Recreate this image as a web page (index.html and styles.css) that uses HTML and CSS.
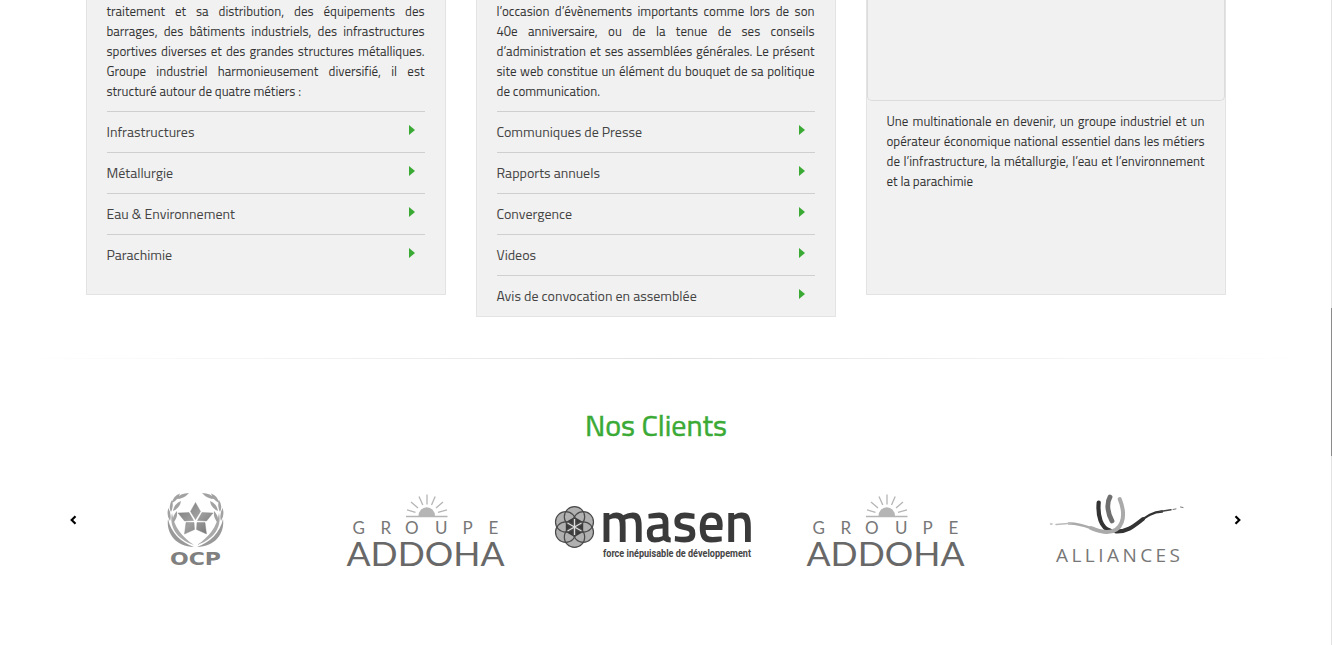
FILE: index.html
```html
<!DOCTYPE html>
<html lang="fr">
<head>
<meta charset="utf-8">
<title>Nos Clients</title>
<link rel="stylesheet" href="styles.css">
</head>
<body>
<div class="page">
<main class="content">
  <section class="cards">
    <article class="card short">
      <div class="copy">
        <p>traitement et sa distribution, des équipements des</p>
        <p>barrages, des bâtiments industriels, des infrastructures</p>
        <p>sportives diverses et des grandes structures métalliques.</p>
        <p>Groupe industriel harmonieusement diversifié, il est</p>
        <p class="last">structuré autour de quatre métiers :</p>
      </div>
      <ul class="links">
        <li><span>Infrastructures</span><i></i></li>
        <li><span>Métallurgie</span><i></i></li>
        <li><span>Eau &amp; Environnement</span><i></i></li>
        <li><span>Parachimie</span><i></i></li>
      </ul>
    </article>
    <article class="card">
      <div class="copy">
        <p>l’occasion d’évènements importants comme lors de son</p>
        <p>40e anniversaire, ou de la tenue de ses conseils</p>
        <p>d’administration et ses assemblées générales. Le présent</p>
        <p>site web constitue un élément du bouquet de sa politique</p>
        <p class="last">de communication.</p>
      </div>
      <ul class="links">
        <li><span>Communiques de Presse</span><i></i></li>
        <li><span>Rapports annuels</span><i></i></li>
        <li><span>Convergence</span><i></i></li>
        <li><span>Videos</span><i></i></li>
        <li><span>Avis de convocation en assemblée</span><i></i></li>
      </ul>
    </article>
    <article class="card short media">
      <div class="video"></div>
      <div class="copy">
        <p>Une multinationale en devenir, un groupe industriel et un</p>
        <p>opérateur économique national essentiel dans les métiers</p>
        <p>de l’infrastructure, la métallurgie, l’eau et l’environnement</p>
        <p class="last">et la parachimie</p>
      </div>
    </article>
  </section>
  <div class="divider"></div>
  <h2 class="title">Nos Clients</h2>
  <section class="carousel">
    <svg class="nav" viewBox="0 0 8 10"><path d="M6.500 1.200 2.700 5 6.500 8.800"/></svg>
    <div class="slides">
      <svg class="logo" viewBox="81 480 230 100">
        <defs>
          <linearGradient id="metal" x1="0" y1="0" x2="1" y2="1"><stop offset="0" stop-color="#777"/><stop offset=".5" stop-color="#a0a0a0"/><stop offset="1" stop-color="#707070"/></linearGradient>
          <g id="branch">
            <path d="M168 519C166 533 176 547 194 547C181 542 171 533 168 519Z" fill="#999"/>
            <path d="M172 513C169 526 176 539 194 545C182 537 174 527 172 513Z" fill="#aaa"/>
            <path d="M189 493Q180 493 176 499Q184 499 189 493ZM180 493.500Q173 496 172 503Q178 500 180 493.500ZM172 500Q168 506 171 512Q174 506 172 500ZM181 501Q174 504 173 511Q180 508 181 501ZM168.500 508Q166 515 170 521Q172 515 168.500 508ZM177 511Q172 516 173 523Q178 518 177 511Z" fill="#a2a2a2"/>
          </g>
        </defs>
        <use href="#branch"/><use href="#branch" transform="translate(391 0) scale(-1 1)"/>
        <path d="M195.500 502.500 200.500 511.500 195.500 519.500 190.500 511.500ZM213 513 206.500 521 197.500 520.500 202 512.500ZM206.500 534 196.500 529.500 197 522.500 205 522.500ZM184.500 534 186 522.500 194 522.500 194.500 529.500ZM178 513 189 512.500 193.500 520.500 184.500 521Z" fill="url(#metal)" stroke="#858585" stroke-width=".4"/>
        <text x="170" y="565" textLength="51" lengthAdjust="spacingAndGlyphs" class="ocp">OCP</text>
      </svg>
      <svg class="logo" viewBox="311 480 230 100">
        <g id="addoha">
          <path d="M418.500 516a8 8.500 0 0 1 16.500 0Z" fill="#b5b5b5"/>
          <path d="M406 516.500H447.500M407 509.800 415.500 512.300M411 502 418 508M419 496.500 422.800 505M427 494.500V504.500M435.200 496.500 431.500 505M443 502 436 508M447 509.800 438 512.300" stroke="#b5b5b5" stroke-width="1.300" fill="none"/>
          <text x="352.500 380.500 405 435 462.500 488.500" y="533.500" class="groupe">GROUPE</text>
          <text x="346.500" y="566" textLength="158" lengthAdjust="spacingAndGlyphs" class="addoha">ADDOHA</text>
        </g>
      </svg>
      <svg class="logo" viewBox="541 480 230 100">
        <g fill="#b0b0b0"><circle cx="574.500" cy="516.800" r="10.200"/><circle cx="583.300" cy="521.900" r="10.200"/><circle cx="583.300" cy="532.100" r="10.200"/><circle cx="574.500" cy="537.200" r="10.200"/><circle cx="565.700" cy="532.100" r="10.200"/><circle cx="565.700" cy="521.900" r="10.200"/></g>
        <path d="M574.500 517 583.200 522V532L574.500 537 565.800 532V522Z" fill="#3a3a3a"/>
        <g fill="none" stroke="#4a4a4a" stroke-width="1.200"><circle cx="574.500" cy="516.800" r="10.200"/><circle cx="583.300" cy="521.900" r="10.200"/><circle cx="583.300" cy="532.100" r="10.200"/><circle cx="574.500" cy="537.200" r="10.200"/><circle cx="565.700" cy="532.100" r="10.200"/><circle cx="565.700" cy="521.900" r="10.200"/></g>
        <path d="M574.500 519V535M567.500 523 581.500 531M581.500 523 567.500 531" stroke="#ddd" stroke-width="1.300"/>
        <text x="600" y="542" textLength="154" lengthAdjust="spacingAndGlyphs" class="masen">masen</text>
        <text x="603" y="556.500" textLength="148" lengthAdjust="spacingAndGlyphs" class="tagline">force inépuisable de développement</text>
      </svg>
      <svg class="logo" viewBox="771 480 230 100"><use href="#addoha" x="460"/></svg>
      <svg class="logo" viewBox="1001 480 230 100">
        <g fill="none" stroke-linecap="round">
          <path d="M1098.700 502.500C1097.500 516 1101 528 1110 530.500" stroke="#333" stroke-width="4.200"/>
          <path d="M1116 531.500C1136 532 1143 512 1162 511.500" stroke="#333" stroke-width="2.500"/>
          <path d="M1116 531.500C1128 532 1135 525 1143 519" stroke="#333" stroke-width="4"/>
          <path d="M1160 511.500 1171 509.800" stroke="#444" stroke-width="1.500"/>
          <path d="M1173 509.500 1176 508.900M1180.500 507 1183 507.500" stroke="#777" stroke-width="1"/>
          <path d="M1110 497C1106 504 1108 514 1112 521" stroke="#707070" stroke-width="4.800"/>
          <path d="M1107 532C1095 532 1085 523 1069 523.500" stroke="#aaa" stroke-width="2.500"/>
          <path d="M1119.700 499C1127 517 1122 532 1107 532C1100 532 1096 530 1091 528" stroke="#aaa" stroke-width="4"/>
          <path d="M1056 524.500 1071 523.300M1050.500 524 1052 524" stroke="#bbb" stroke-width="1.500"/>
        </g>
        <text x="1056" y="561.500" textLength="124" class="alliances">ALLIANCES</text>
      </svg>
    </div>
    <svg class="nav" viewBox="0 0 8 10"><path d="M1.500 1.200 5.300 5 1.500 8.800"/></svg>
  </section>
</main>
<aside class="scroll"><div class="thumb"></div></aside>
</div>
</body>
</html>
```
FILE: styles.css
```css
* { box-sizing: border-box; }
body { margin: 0; background: #fff; overflow: hidden; font-family: "Titillium Web", Roboto, "Liberation Sans", sans-serif; color: #333; }
.page { display: flex; height: 645px; }
.content { width: 1331px; flex: none; }
.cards { display: grid; grid-template-columns: repeat(3, 360px); gap: 30px; align-items: start; height: 358px; padding-left: 85.5px; }
.card { height: 317px; border: 1px solid #e3e3e3; border-top: 0; background: #f1f1f1; padding: 1px 20px 0; }
.card.short { height: 295px; }
.card.media { padding: 0; }
.video { height: 101px; border: 1px solid #dcdcdc; border-top: 0; border-radius: 0 0 5px 5px; }
.media .copy { padding: 10px 20px 0; }
.copy p { margin: 0; height: 20px; line-height: 20px; font-size: 13px; text-align: justify; text-align-last: justify; white-space: nowrap; }
.copy .last { text-align-last: left; }
.links { list-style: none; margin: 10px 0 0; padding: 0; }
.links li { display: flex; justify-content: space-between; height: 41px; border-top: 1px solid #cfcfcf; line-height: 40px; font-size: 14px; color: #444; white-space: nowrap; }
.links i { width: 6px; height: 10px; margin: 13px 9.5px 0 0; background: #3aaa35; clip-path: polygon(0 0, 100% 50%, 0 100%); }
.divider { height: 1px; margin: 0 21px; background: linear-gradient(90deg, transparent, #e2e2e2 50%, transparent); }
.title { margin: 44px 0 0; padding-right: 19px; height: 45px; line-height: 44px; text-align: center; color: #3aaa35; font-size: 30px; font-weight: 400; -webkit-text-stroke: .5px #3aaa35; }
.carousel { display: flex; padding: 32px 0 0 69px; }
.nav { width: 8px; height: 10px; margin-top: 35px; fill: none; stroke: #000; stroke-width: 2.200; }
.slides { display: grid; grid-template-columns: repeat(5, 230px); margin: 0 3px 0 4px; }
.logo { display: block; width: 230px; height: 100px; }
.ocp { font: bold 17px "DejaVu Sans", sans-serif; fill: #808080; }
.groupe { font: 17px Lato, sans-serif; fill: #777; }
.addoha { font: 33px Lato, sans-serif; fill: #686868; }
.masen { font: 600 59px "Titillium Web", Roboto, sans-serif; fill: #3a3a3a; }
.tagline { font: bold 10px Roboto, sans-serif; fill: #454545; }
.alliances { font: 19px "Open Sans", sans-serif; fill: #777; }
.scroll { width: 1px; height: 645px; padding-top: 308px; background: #e3e3e3; }
.thumb { height: 148px; background: #8b8b8b; }
```
